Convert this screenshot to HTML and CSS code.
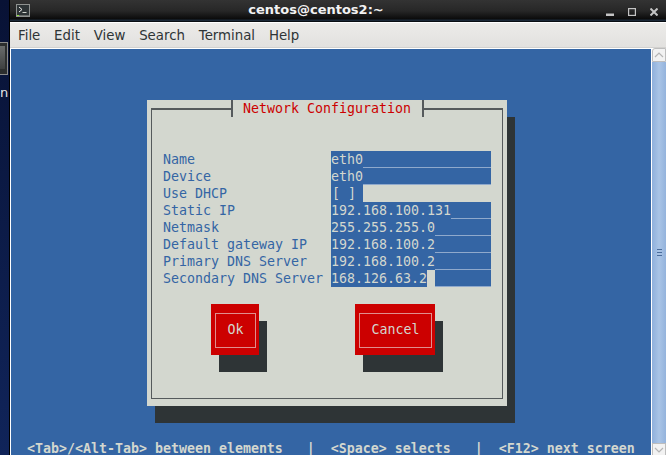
FILE: index.html
```html
<!DOCTYPE html>
<html lang="en">
<head>
<meta charset="utf-8">
<title>centos@centos2:~</title>
<link rel="stylesheet" href="styles.css">
</head>
<body>
<div class="desktop">
  <aside class="desk-edge">
    <div class="desk-icon"><div class="desk-icon-screen"></div></div>
    <div class="desk-label">n</div>
  </aside>
  <main class="window">
    <header class="titlebar">
      <div class="term-icon"><svg width="14" height="13" viewBox="0 0 14 13"><rect x="0.5" y="0.5" width="13" height="12" fill="#2e3436" stroke="#8f9290"/><path d="M3 3l3 2.5-3 2.5" fill="none" stroke="#eeeeec"/><path d="M6.500 8.500h4" stroke="#d3d7cf"/><path d="M1 11.500h2" stroke="#8ae234"/><path d="M3 11.500h10" stroke="#6a6e6c"/></svg></div>
      <div class="title">centos@centos2:~</div>
      <div class="controls">
        <svg width="8" height="8" viewBox="0 0 8 8"><rect x="0" y="5.500" width="8" height="2.500" fill="#c4c4c4"/></svg>
        <svg width="8" height="8" viewBox="0 0 8 8"><rect x="0.600" y="0.600" width="6.800" height="6.800" fill="none" stroke="#c4c4c4" stroke-width="1.200"/></svg>
        <svg width="8" height="8" viewBox="0 0 8 8"><path d="M0.500 0.500l7 7M7.500 0.500l-7 7" stroke="#c4c4c4" stroke-width="2" fill="none"/></svg>
      </div>
    </header>
    <nav class="menubar">
      <span class="menu-item">File</span>
      <span class="menu-item">Edit</span>
      <span class="menu-item">View</span>
      <span class="menu-item">Search</span>
      <span class="menu-item">Terminal</span>
      <span class="menu-item">Help</span>
    </nav>
    <div class="term-row">
      <section class="screen">
        <div class="dialog">
          <div class="frame">
            <div class="dialog-title">Network Configuration</div>
            <div class="form">
              <div class="labels">
                <div>Name</div>
                <div>Device</div>
                <div>Use DHCP</div>
                <div>Static IP</div>
                <div>Netmask</div>
                <div>Default gateway IP</div>
                <div>Primary DNS Server</div>
                <div>Secondary DNS Server</div>
              </div>
              <div class="fields">
                <div class="field"><span>eth0</span><span class="fill"></span></div>
                <div class="field"><span>eth0</span><span class="fill"></span></div>
                <div class="field check"><span>[ ]</span></div>
                <div class="field"><span>192.168.100.131</span><span class="fill"></span></div>
                <div class="field"><span>255.255.255.0</span><span class="fill"></span></div>
                <div class="field"><span>192.168.100.2</span><span class="fill"></span></div>
                <div class="field"><span>192.168.100.2</span><span class="fill"></span></div>
                <div class="field"><span>168.126.63.2</span><span class="cursor"></span><span class="fill"></span></div>
              </div>
            </div>
            <div class="buttons">
              <div class="btn btn-ok"><span class="btn-inner">Ok</span></div>
              <div class="btn btn-cancel"><span class="btn-inner">Cancel</span></div>
            </div>
          </div>
        </div>
        <div class="hints">  &lt;Tab&gt;/&lt;Alt-Tab&gt; between elements   |  &lt;Space&gt; selects   |  &lt;F12&gt; next screen</div>
      </section>
      <div class="scrollbar">
        <div class="scroll-btn scroll-up"><svg width="10" height="6" viewBox="0 0 10 6"><path d="M1 5l4-4 4 4" fill="none" stroke="#b5b5b5" stroke-width="1.200"/></svg></div>
        <div class="scroll-thumb"><i></i><i></i><i></i></div>
        <div class="scroll-btn scroll-down"><svg width="10" height="6" viewBox="0 0 10 6"><path d="M1 1l4 4 4-4" fill="none" stroke="#b5b5b5" stroke-width="1.200"/></svg></div>
      </div>
    </div>
  </main>
</div>
</body>
</html>
```
FILE: styles.css
```css
* { box-sizing: border-box; }
html, body { margin: 0; height: 100%; overflow: hidden; }
.desktop { display: flex; width: 666px; height: 455px; background: #0e1f4d; overflow: hidden; }

.desk-edge { position: relative; width: 9px; flex: none; background: linear-gradient(#081235, #10245a); }
.desk-icon { position: absolute; left: -9px; top: 42px; width: 17px; height: 33px; background: #2c2e2e; border: 1px solid #8a8a8a; }
.desk-icon-screen { height: 23px; margin: 3px 2px; background: linear-gradient(#6a6c6c, #3e4040); }
.desk-label { position: absolute; left: 0; top: 85px; color: #e6e6e6; font: 13px "DejaVu Sans", sans-serif; }

.window { flex: 1; min-width: 0; display: flex; flex-direction: column; border-left: 1px solid #000; background: #fff; }

.titlebar { position: relative; flex: none; height: 22px; display: flex; align-items: center; padding: 0 8px 0 6px; background: linear-gradient(#333 0, #272727 50%, #0c0c0c 85%, #1c2a3a 93%, #000 100%); }
.term-icon { display: flex; flex: none; width: 14px; height: 13px; margin-top: -1px; }
.title { position: absolute; left: 0; right: 44px; top: 1px; text-align: center; color: #f2f2f2; font: bold 13px/17px "DejaVu Sans", sans-serif; }
.controls { margin-left: auto; display: flex; gap: 14px; margin-top: 1px; }

.menubar { flex: none; height: 26px; display: flex; align-items: center; gap: 13.8px; padding: 1px 0 0 8px; background: linear-gradient(#ecebe9, #e2e1df); border-top: 1px solid #fff; border-bottom: 1px solid #d2d1cf; color: #2e3436; font: 13.33px "DejaVu Sans", sans-serif; }

.term-row { flex: 1; min-height: 0; display: flex; padding-left: 1px; background: #fff; }
.screen { width: 640px; flex: none; margin-top: 1px; padding-top: 51px; padding-left: 136px; background: #3465a4; font: 13.29px/17px "DejaVu Sans Mono", monospace; }

.dialog { width: 360px; height: 306px; padding: 8px 4px 7px; background: #d3d7cf; box-shadow: 8px 17px 0 #2e3436; }
.frame { position: relative; height: 100%; padding: 41px 11px 0; border: 1px solid #555a5c; border-top-width: 2px; }
.dialog-title { position: absolute; left: 79px; top: -10px; width: 193px; height: 17px; padding-left: 10px; color: #cc0000; background: #d3d7cf; border-left: 2px solid #555a5c; border-right: 2px solid #555a5c; }

.form { display: flex; color: #3465a4; }
.labels { width: 168px; flex: none; }
.fields { width: 160px; flex: none; color: #d3d7cf; }
.field { display: flex; height: 17px; background: #3465a4; }
.check { width: 32px; padding-left: 1px; }
.fill { flex: 1; height: 17px; border-bottom: 1px solid #8fa9cc; }
.cursor { width: 8px; height: 17px; background: #d3d7cf; }

.buttons { display: flex; margin-top: 17px; padding-left: 48px; }
.btn { height: 51px; padding: 9px 3px 7px 4px; background: #cc0000; box-shadow: 8px 17px 0 #2e3436; color: #d3d7cf; }
.btn-inner { display: block; height: 100%; line-height: 31px; text-align: center; border: 1px solid #e08e8e; }
.btn-ok { width: 48px; margin-right: 96px; }
.btn-cancel { width: 80px; }

.hints { margin-top: 34px; margin-left: -136px; white-space: pre; color: #d3d7cf; font-weight: bold; }

.scrollbar { flex: 1; display: flex; flex-direction: column; padding-left: 1px; }
.scroll-btn { flex: none; display: flex; align-items: center; justify-content: center; background: #f2f2f2; border: 1px solid #bdbdbd; }
.scroll-up { height: 14px; border-top-left-radius: 3px; }
.scroll-down { height: 12px; border-bottom: 0; }
.scroll-thumb { flex: 1; display: flex; flex-direction: column; align-items: center; justify-content: center; gap: 2px; background: linear-gradient(90deg, #8fb0dc, #a9c4e6 50%, #94b3dc); }
.scroll-thumb i { display: block; width: 5px; height: 1px; background: #4a6c9c; }
```
